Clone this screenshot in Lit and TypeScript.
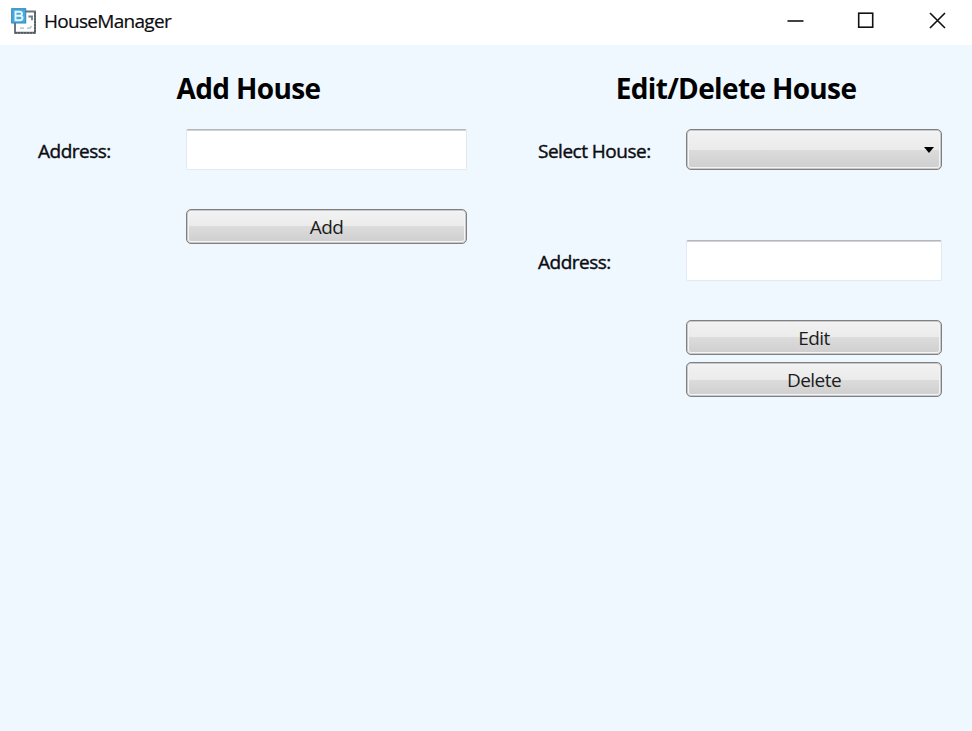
import { LitElement, html, css } from "lit";
import { customElement } from "lit/decorators.js";

@customElement("app-root")
class AppRoot extends LitElement {
  static styles = css`
    :host {
      display: flex;
      flex-direction: column;
      width: 972px;
      height: 731px;
      overflow: hidden;
      background: #eff7ff;
      color: #0c0c10;
      font-family: "Open Sans", "Noto Sans", sans-serif;
      font-size: 19px;
    }
    * { box-sizing: border-box; }
    .titlebar {
      display: flex;
      align-items: center;
      flex: none;
      height: 45px;
      padding: 0 0 4px 10px;
      background: #fff;
    }
    .logo { flex: none; width: 28px; height: 28px; }
    .title {
      flex: 1;
      margin-left: 6px;
      line-height: 26px;
      letter-spacing: -0.7px;
      -webkit-text-stroke: 0.2px currentColor;
    }
    .controls { flex: none; width: 202px; height: 41px; }
    .content { display: grid; grid-template-columns: 497px 472px; gap: 3px; }
    .heading {
      margin: 0;
      padding-top: 24px;
      height: 84px;
      line-height: 38px;
      font-size: 28px;
      font-weight: 700;
      text-align: center;
      color: #000;
      letter-spacing: -0.65px;
    }
    .form {
      display: grid;
      grid-template-columns: 148px 1fr;
      padding: 0 30px 0 38px;
    }
    .label {
      line-height: 41px;
      height: 41px;
      padding-top: 2px;
      letter-spacing: -0.5px;
      white-space: nowrap;
      -webkit-text-stroke: 0.4px currentColor;
    }
    .field {
      width: 100%;
      height: 41px;
      padding: 0 6px;
      border: 1px solid #e2e9f0;
      border-top-color: #b4b7bc;
      border-radius: 2px;
      background: #fff;
      box-shadow: inset 0 1px #d0d2d5;
      outline: none;
      font: inherit;
    }
    .button {
      display: flex;
      align-items: center;
      justify-content: center;
      grid-column: 2;
      height: 35px;
      padding: 0;
      border: 1px solid #808080;
      border-radius: 5px;
      background: linear-gradient(#f2f2f2, #ebebeb 50%, #dcdcdc 50%, #cecece);
      box-shadow: inset 0 0 0 1px #c8c8c8, inset 0 0 0 2px #f4f4f4;
      color: #1c1c1c;
      font: inherit;
      letter-spacing: -0.55px;
    }
    .button.combo { height: 41px; justify-content: flex-end; padding: 0 6px 0 0; }
    .after-field { margin-top: 39px; }
    .after-button { margin-top: 7px; }
    .lower { margin-top: 70px; }
  `;

  render() {
    return html`
      <header class="titlebar">
        <svg class="logo" viewBox="0 0 28 28">
          <path d="M5 4.5H25V25.8H5Z" fill="#fff" stroke="#68727a" stroke-width="1.9" />
          <path d="M5 26H25V5" fill="none" stroke="#454d54" stroke-width="1.9" stroke-dasharray="2 1" stroke-opacity="0.6" />
          <path d="M18.5 9.5H22V13.2" fill="none" stroke="#727b84" stroke-width="1.8" />
          <path d="M10 21.2H14M17 21.2H20L21.5 19" fill="none" stroke="#b0b5c0" stroke-width="1.3" />
          <rect x="1.7" y="1.7" width="14" height="14.3" fill="#48a9dc" stroke="#2c86b9" stroke-width="1" />
          <path d="M5.5 4.7H9.5Q12 4.7 12 6.6T10 8.8Q12.5 9 12.5 11T10 13.3H5.5ZM5.5 8.8H10" fill="none" stroke="#e6f6ff" stroke-width="1.9" />
        </svg>
        <span class="title">HouseManager</span>
        <svg class="controls" viewBox="0 0 202 41" fill="none" stroke="#111" stroke-width="1.6">
          <path d="M17.5 21H33.5" />
          <rect x="88.7" y="13.2" width="14" height="14" />
          <path d="M160 13L175 28M175 13L160 28" />
        </svg>
      </header>
      <main class="content">
        <section>
          <h1 class="heading">Add House</h1>
          <div class="form">
            <span class="label">Address:</span>
            <input class="field" type="text" aria-label="Address" />
            <button class="button after-field">Add</button>
          </div>
        </section>
        <section>
          <h1 class="heading">Edit/Delete House</h1>
          <div class="form">
            <span class="label">Select House:</span>
            <button class="button combo" aria-label="Select House">
              <svg width="12" height="8" viewBox="0 0 12 8"><path d="M1 1H11L6 7Z" fill="#000" /></svg>
            </button>
            <span class="label lower">Address:</span>
            <input class="field lower" type="text" aria-label="Address" />
            <button class="button after-field">Edit</button>
            <button class="button after-button">Delete</button>
          </div>
        </section>
      </main>
    `;
  }
}
